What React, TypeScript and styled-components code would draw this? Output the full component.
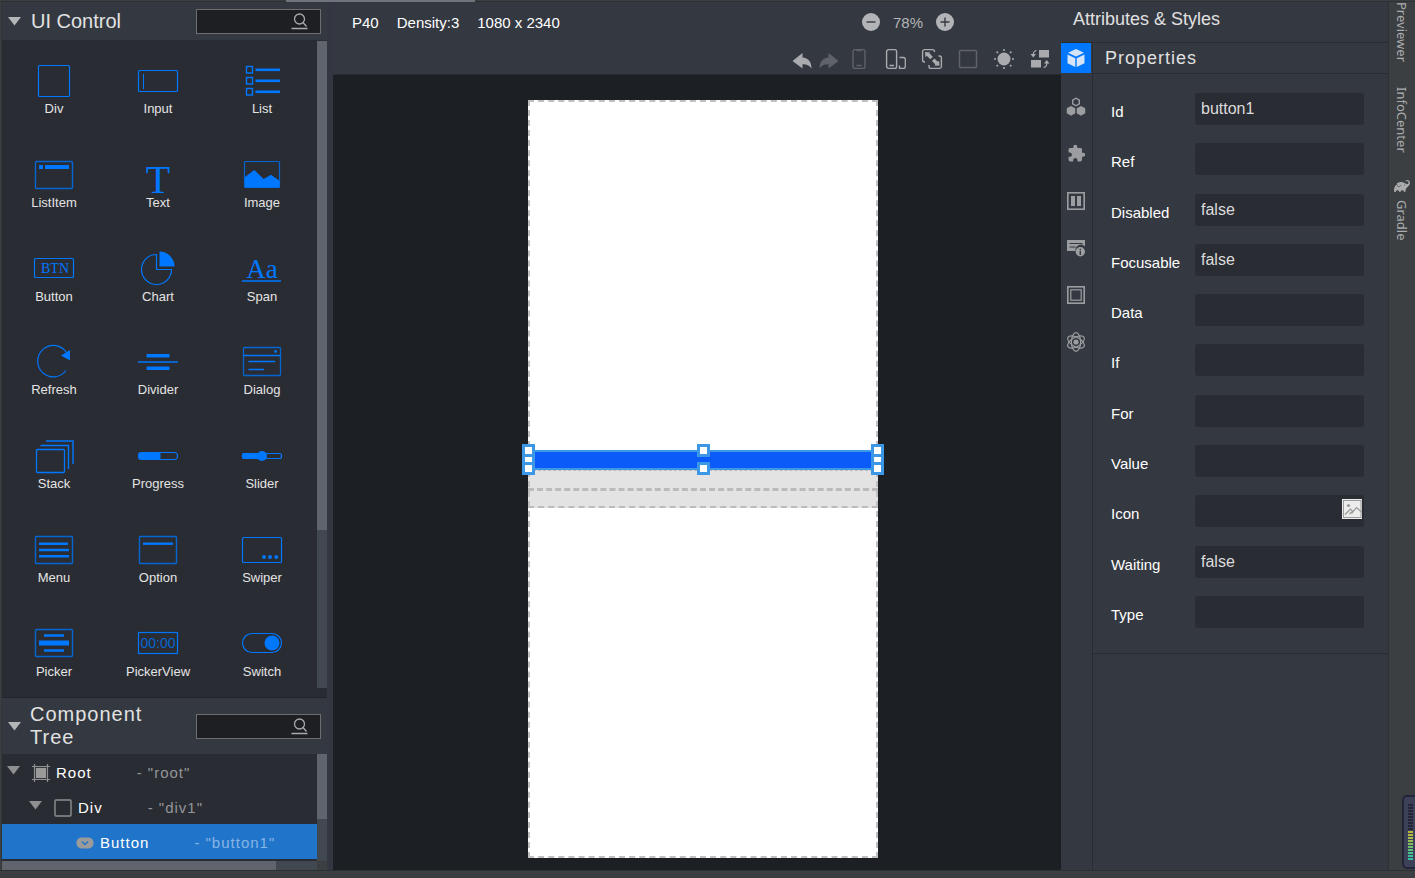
import React from "react";
import styled, { createGlobalStyle } from "styled-components";
import { MdExtension } from "react-icons/md";
import { SiGradle } from "react-icons/si";

const c = {
  ide: "#3c3f41",
  ideLine: "#2e3134",
  panel: "#343840",
  well: "#2a2c33",
  line: "#292c32",
  stage: "#1c1f23",
  thumb: "#60646c",
  track: "#414850",
  blue: "#0077ff",
  blueDim: "#0566d2",
  text: "#dcdddf",
  icon: "#9b9da0",
  iconOff: "#5f6268",
};

const GlobalStyle = createGlobalStyle`
  * { box-sizing: border-box; }
  body {
    margin: 0;
    background: ${c.ide};
    font-family: "Liberation Sans", Arial, sans-serif;
    color: ${c.text};
  }
  button, input { font: inherit; color: inherit; }
  button { background: none; border: 0; padding: 0; cursor: pointer; }
  h1, h2 { margin: 0; font-weight: 400; }
  svg { display: block; overflow: visible; }
`;

/* ---------- shell ---------- */

const Shell = styled.div`
  display: flex;
  flex-direction: column;
  min-height: 100vh;
`;

const TopEdge = styled.div`
  height: 2px;
  background: linear-gradient(${c.ide} 1px, ${c.ideLine} 1px);
  padding-left: 286px;
`;

const TabScroll = styled.div`
  width: 189px;
  height: 2px;
  background: #6f737a;
`;

const Body = styled.div`
  flex: 1;
  display: grid;
  grid-template-columns: 2px 325px 6px minmax(0, 1fr) 328px 26px;
`;

const LeftEdge = styled.div`
  background: ${c.ide};
  border-right: 1px solid #34373a;
`;

const Splitter = styled.div`
  background: #343641;
`;

const StatusBar = styled.footer`
  height: 8px;
  background: ${c.ide};
  border-top: 1px solid ${c.ideLine};
`;

/* ---------- left column ---------- */

const Sidebar = styled.aside`
  display: flex;
  flex-direction: column;
  background: ${c.well};
`;

const PanelHeader = styled.header<{ $tall?: boolean }>`
  display: flex;
  align-items: center;
  height: ${(p) => (p.$tall ? 56 : 38)}px;
  padding: 0 6px;
  background: ${c.panel};
`;

const PanelTitle = styled.h2<{ $spaced?: boolean }>`
  flex: 1;
  margin-left: ${(p) => (p.$spaced ? 9 : 10)}px;
  padding-right: 40px;
  font-size: 20px;
  line-height: 23px;
  letter-spacing: ${(p) => (p.$spaced ? "1px" : "normal")};
  color: #e2e2e2;
`;

const SearchBox = styled.label`
  display: flex;
  align-items: center;
  flex: none;
  width: 125px;
  height: 25px;
  padding-right: 12px;
  background: #1d1f23;
  border: 1px solid #6c6e71;
`;

const SearchInput = styled.input`
  flex: 1;
  min-width: 0;
  padding: 0 6px;
  border: 0;
  outline: 0;
  background: transparent;
  font-size: 14px;
`;

const Palette = styled.div`
  flex: 1;
  display: flex;
  border-top: 1px solid ${c.line};
  border-bottom: 1px solid #22252a;
`;

const PaletteGrid = styled.div`
  flex: 1;
  display: grid;
  grid-template-columns: repeat(3, 104px);
  grid-template-rows: repeat(7, 1fr);
`;

const PaletteItem = styled.button`
  display: flex;
  flex-direction: column;
  align-items: center;
  justify-content: flex-start;
  padding-top: 20px;
  font-size: 13px;
  line-height: 15px;
  color: #e4e4e4;
`;

const VScroll = styled.div`
  display: flex;
  flex-direction: column;
  width: 10px;
`;

const Thumb = styled.div<{ $w?: string; $h?: string }>`
  width: ${(p) => p.$w ?? "100%"};
  height: ${(p) => p.$h ?? "100%"};
  background: ${c.thumb};
`;

const Track = styled.div`
  flex: 1;
  background: ${c.track};
`;

const PaletteScroll = styled(VScroll)`
  padding-bottom: 9px;
`;

const TreeArea = styled.div`
  display: flex;
`;

const TreeList = styled.ul`
  flex: 1;
  margin: 0;
  padding: 0 0 2px;
  list-style: none;
`;

const TreeRow = styled.li<{ $depth: number; $selected?: boolean }>`
  display: flex;
  align-items: center;
  height: 35px;
  padding: 2px 0 0 ${(p) => 5 + p.$depth * 22}px;
  background: ${(p) => (p.$selected ? "#2074c9" : "transparent")};
  font-size: 15px;
  letter-spacing: 1px;
  color: #fff;
`;

const TreeCaret = styled.span`
  width: 13px;
  height: 14px;
  margin-right: 12px;
`;

const TreeIcon = styled.span`
  width: 18px;
  margin-right: 6px;
`;

const TreeValue = styled.span<{ $selected?: boolean }>`
  margin-left: 45px;
  color: ${(p) => (p.$selected ? "#86b6e6" : "#94969a")};
`;

const HScroll = styled.div`
  display: flex;
  height: 9px;
  padding-right: 10px;
  background: ${c.ide};
`;

/* ---------- centre ---------- */

const Center = styled.main`
  display: flex;
  flex-direction: column;
  background: ${c.stage};
`;

const CenterHeader = styled.header`
  height: 73px;
  background: ${c.panel};
  border-bottom: 1px solid ${c.line};
`;

const InfoRow = styled.div`
  display: flex;
  align-items: center;
  height: 40px;
  padding: 0 107px 0 19px;
  font-size: 15px;
  color: #fff;
`;

const Info = styled.span`
  margin-right: 18px;
`;

const Zoom = styled.div`
  display: flex;
  align-items: center;
  gap: 13px;
  margin-left: auto;
  color: #b3b4b7;
`;

const Toolbar = styled.div`
  display: flex;
  justify-content: flex-end;
  height: 33px;
  padding-right: 3px;
`;

const ToolButton = styled.button<{ $narrow?: boolean; $dim?: boolean }>`
  display: grid;
  place-items: center;
  width: ${(p) => (p.$narrow ? 27 : 36)}px;
  color: ${(p) => (p.$dim ? c.iconOff : "#aaabae")};
`;

const Stage = styled.div`
  flex: 1;
  display: flex;
  justify-content: center;
  align-items: flex-start;
  padding: 25px 0 12px 12px;
`;

const Device = styled.div`
  display: flex;
  flex-direction: column;
  justify-content: center;
  width: 350px;
  aspect-ratio: 1080 / 2340;
  background: #fff;
  outline: 2px dashed #c0c0c0;
  outline-offset: -2px;
`;

const SelectedButton = styled.div`
  position: relative;
  height: 20px;
  background: #0a5bf7;
  border: solid #3c98e6;
  border-width: 2px 0;
`;

const SelectionFrame = styled.div`
  position: absolute;
  inset: -1px 0 -1px 1px;
`;

const Handle = styled.span<{ $x: number; $y: number }>`
  position: absolute;
  left: ${(p) => p.$x}%;
  top: ${(p) => p.$y}%;
  width: 13px;
  height: 13px;
  margin: -7px 0 0 -7px;
  background: #fff;
  border: 3px solid #3c98e6;
`;

const EmptyRow = styled.div`
  height: 18px;
  background: #e3e3e3;
  border-top: 1px dashed #bbb;

  & + & {
    height: 20px;
    border-top-width: 3px;
    border-bottom: 2px dashed #bbb;
  }
`;

/* ---------- attributes ---------- */

const Attributes = styled.aside`
  display: flex;
  flex-direction: column;
  background: ${c.panel};
  border-right: 1px solid ${c.ideLine};
`;

const AttributesTitle = styled.h1`
  height: 41px;
  padding-left: 12px;
  font-size: 18px;
  line-height: 34px;
  border-bottom: 1px solid ${c.line};
  color: #e0e0e0;
`;

const AttributesBody = styled.div`
  flex: 1;
  display: flex;
`;

const Rail = styled.nav`
  display: flex;
  flex-direction: column;
  width: 32px;
  border-right: 1px solid ${c.line};
`;

const RailButton = styled.button<{ $active?: boolean }>`
  display: grid;
  place-items: center;
  width: 30px;
  height: ${(p) => (p.$active ? 30 : 47)}px;
  margin-bottom: ${(p) => (p.$active ? 10 : 0)}px;
  background: ${(p) => (p.$active ? c.blue : "transparent")};
  color: ${(p) => (p.$active ? "#d5e4f7" : c.icon)};
`;

const Properties = styled.section`
  flex: 1;
`;

const PropertiesTitle = styled.h2`
  height: 31px;
  padding-left: 12px;
  font-size: 18px;
  line-height: 30px;
  letter-spacing: 1px;
  border-bottom: 1px solid ${c.line};
  color: #e0e0e0;
`;

const PropertyForm = styled.form`
  height: 580px;
  display: grid;
  grid-template-columns: 84px 1fr;
  grid-template-rows: repeat(11, 1fr);
  align-items: center;
  padding: 10px 24px 16px 18px;
  border-bottom: 1px solid ${c.line};
`;

const PropertyLabel = styled.label`
  padding-top: 5px;
  font-size: 15px;
  color: #fff;
`;

const PropertyField = styled.div`
  position: relative;
`;

const PropertyInput = styled.input`
  display: block;
  width: 100%;
  height: 32px;
  padding: 0 6px;
  border: 0;
  border-radius: 3px;
  outline: 0;
  background: ${c.well};
  font-size: 16px;
  color: #dcdcdc;
`;

const PickImage = styled.button`
  position: absolute;
  right: 2px;
  top: 4px;
`;

/* ---------- tool window strip ---------- */

const Strip = styled.nav`
  position: relative;
  display: flex;
  flex-direction: column;
  align-items: center;
  background: ${c.ide};
`;

const StripTab = styled.button`
  display: flex;
  align-items: center;
  gap: 6px;
  margin-bottom: 25px;
  writing-mode: vertical-rl;
  font-family: "Noto Sans", sans-serif;
  font-size: 13px;
  line-height: 22px;
  color: #a9abad;
`;

const Meter = styled.div`
  position: absolute;
  right: 0;
  bottom: 1px;
  display: flex;
  flex-direction: column;
  justify-content: flex-end;
  gap: 1px;
  width: 13px;
  height: 74px;
  padding: 8px 2px 7px 4px;
  background: #3d4158;
  border: 2px solid #23263a;
  border-right: 0;
  border-radius: 5px 0 0 5px;
`;

const MeterBar = styled.i<{ $color: string }>`
  width: 5px;
  height: 2px;
  flex: none;
  background: ${(p) => p.$color};
`;

/* ---------- drawings ---------- */

const Art = ({ children }: { children: React.ReactNode }) => (
  <svg width="44" height="40" viewBox="0 0 44 40" fill="none" stroke={c.blue} strokeWidth="1" aria-hidden="true">
    {children}
  </svg>
);

const solid = { fill: c.blue, stroke: "none" };

const Card = ({ y = 6 }: { y?: number }) => (
  <rect x="3.5" y={y + 0.5} width="37" height="27" rx="1" stroke={c.blueDim} strokeWidth="1.4" />
);

const palette: { name: string; art: React.ReactNode }[] = [
  { name: "Div", art: <rect x="6.5" y="4.5" width="31" height="31" rx="1" strokeWidth="1.2" /> },
  {
    name: "Input",
    art: (
      <>
        <rect x="2.5" y="9.5" width="39" height="21" rx="1" strokeWidth="1.2" />
        <path d="M7.5 13V28" />
      </>
    ),
  },
  {
    name: "List",
    art: [5.5, 16.5, 27.5].map((y) => (
      <g key={y}>
        <rect x="6.5" y={y} width="6" height="6.5" strokeWidth="1.4" />
        <rect x="15.5" y={y + 2} width="24.5" height="2.6" {...solid} />
      </g>
    )),
  },
  {
    name: "ListItem",
    art: (
      <>
        <Card />
        <rect x="7" y="10" width="4" height="4" {...solid} />
        <rect x="13" y="10" width="24" height="4" {...solid} />
      </>
    ),
  },
  {
    name: "Text",
    art: (
      <text x="22" y="38" fontSize="40" textAnchor="middle" fontFamily="Liberation Serif, serif" {...solid}>
        T
      </text>
    ),
  },
  {
    name: "Image",
    art: (
      <>
        <rect x="4.5" y="6.5" width="35" height="26" rx="1" stroke={c.blueDim} strokeWidth="1.2" />
        <path d="M5 22L14.3 15L23.7 24L31 19.7L39.5 25.7V32.5H5Z" {...solid} />
      </>
    ),
  },
  {
    name: "Button",
    art: (
      <>
        <rect x="2.5" y="9.5" width="39" height="19" rx="1" strokeWidth="1.2" />
        <text x="23" y="24" fontSize="14" textAnchor="middle" fontFamily="Liberation Serif, serif" {...solid}>
          BTN
        </text>
      </>
    ),
  },
  {
    name: "Chart",
    art: (
      <>
        <path d="M20.5 5.5A15 15 0 1 0 35.5 20.5H20.5Z" strokeWidth="1.2" />
        <path d="M23.5 2.5A15 15 0 0 1 38.5 17.5H23.5Z" {...solid} />
      </>
    ),
  },
  {
    name: "Span",
    art: (
      <>
        <text x="22" y="29" fontSize="27" textAnchor="middle" fontFamily="Liberation Serif, serif" {...solid}>
          Aa
        </text>
        <path d="M2 32H41" strokeWidth="1.6" />
      </>
    ),
  },
  {
    name: "Refresh",
    art: (
      <>
        <path d="M34 28.5A15.7 15.7 0 1 1 34.5 10.5" strokeWidth="1.2" />
        <path d="M29 13.5L38 8V18.5Z" {...solid} />
      </>
    ),
  },
  {
    name: "Divider",
    art: (
      <>
        <path d="M2 20H42" strokeWidth="1.3" />
        <rect x="10.5" y="12" width="23" height="3.5" {...solid} />
        <rect x="10.5" y="24.5" width="23" height="3.5" {...solid} />
      </>
    ),
  },
  {
    name: "Dialog",
    art: (
      <>
        <rect x="3.5" y="5.5" width="37" height="28" rx="1" stroke={c.blueDim} strokeWidth="1.3" />
        <path d="M3.5 13.5H40.5M8.5 19.5H35M8.5 27.5H24" strokeWidth="1.3" />
        <circle cx="35.5" cy="9.5" r="1.4" {...solid} />
      </>
    ),
  },
  {
    name: "Stack",
    art: (
      <>
        <rect x="4.5" y="13.5" width="28" height="23" rx="1" strokeWidth="1.3" />
        <path d="M8.5 9.5H36.5V33M14 5H41V28" strokeWidth="1.4" />
      </>
    ),
  },
  {
    name: "Progress",
    art: (
      <>
        <rect x="2.5" y="16.5" width="39" height="7" rx="3.5" strokeWidth="1.2" />
        <path d="M6 16H24.5V24H6A4 4 0 0 1 6 16Z" {...solid} />
      </>
    ),
  },
  {
    name: "Slider",
    art: (
      <>
        <rect x="2.5" y="17.5" width="39" height="5" rx="2" strokeWidth="1.2" />
        <path d="M4 17H22V23H4A2 2 0 0 1 2 21V19A2 2 0 0 1 4 17Z" {...solid} />
        <circle cx="22" cy="20" r="5" {...solid} />
      </>
    ),
  },
  {
    name: "Menu",
    art: (
      <>
        <Card />
        <path d="M7 13.7H36M7 20H37M7 26.3H37" strokeWidth="2.4" />
      </>
    ),
  },
  {
    name: "Option",
    art: (
      <>
        <Card />
        <path d="M7 13.7H37" strokeWidth="2.4" />
      </>
    ),
  },
  {
    name: "Swiper",
    art: (
      <>
        <rect x="2.5" y="7.5" width="39" height="25" rx="1" strokeWidth="1.2" />
        <circle cx="24" cy="27" r="2" {...solid} />
        <circle cx="30" cy="27" r="2" {...solid} />
        <circle cx="36.3" cy="27" r="2" {...solid} />
      </>
    ),
  },
  {
    name: "Picker",
    art: (
      <>
        <Card y={5} />
        <path d="M12 11.5H32M12 26.5H32" strokeWidth="2.4" />
        <rect x="7" y="16.5" width="30" height="5" {...solid} />
      </>
    ),
  },
  {
    name: "PickerView",
    art: (
      <>
        <rect x="2.5" y="8.5" width="39" height="21" strokeWidth="1.2" />
        <text x="22" y="24" fontSize="14" textAnchor="middle" fill={c.blueDim} stroke="none">
          00:00
        </text>
      </>
    ),
  },
  {
    name: "Switch",
    art: (
      <>
        <rect x="2.5" y="9.5" width="39" height="19" rx="9.5" strokeWidth="1.2" />
        <circle cx="32" cy="19" r="7.5" {...solid} />
      </>
    ),
  },
];

const Caret = ({ dim }: { dim?: boolean }) => (
  <svg width="13" height="9" viewBox="0 0 13 9" aria-hidden="true">
    <path d="M0 0H13L6.5 8.5Z" fill={dim ? "#8d8f91" : "#b4b5b6"} />
  </svg>
);

const Search = ({ label }: { label: string }) => (
  <SearchBox>
    <SearchInput type="text" aria-label={label} />
    <svg width="18" height="18" viewBox="0 0 18 18" fill="none" stroke="#a9aaac" strokeWidth="1.3" aria-hidden="true">
      <circle cx="9.5" cy="7" r="5" />
      <path d="M13 10.5L16.5 14.5M1.5 16.5H17.5" />
    </svg>
  </SearchBox>
);

const Svg20 = ({ children }: { children: React.ReactNode }) => (
  <svg width="20" height="20" viewBox="0 0 20 20" fill="none" stroke="currentColor" strokeWidth="1.2" aria-hidden="true">
    {children}
  </svg>
);

const ink = { fill: "currentColor", stroke: "none" };
const backArrow = "M0.5 12L10.5 4V8.5C16 9 19.5 12.5 19.5 19.5C17 16 14.5 15 10.5 15.2V19.5Z";

const tools: { name: string; narrow?: boolean; dim?: boolean; art: React.ReactNode }[] = [
  { name: "Undo", narrow: true, art: <path d={backArrow} {...ink} /> },
  { name: "Redo", narrow: true, dim: true, art: <path d={backArrow} transform="translate(20 0) scale(-1 1)" {...ink} /> },
  {
    name: "Device",
    dim: true,
    art: (
      <>
        <rect x="3" y="0.6" width="12" height="18.8" rx="2" strokeWidth="1.4" />
        <path d="M6.5 1.5H11.5M6.5 16.5H11.5" strokeWidth="1.4" />
      </>
    ),
  },
  {
    name: "Multiple devices",
    art: (
      <>
        <rect x="0.6" y="0.6" width="10" height="18.8" rx="2" strokeWidth="1.4" />
        <path d="M3.5 16.5H8M13.5 8.5H17.3A2 2 0 0 1 19.3 10.5V17.4A2 2 0 0 1 17.3 19.4H13.5V16.5" strokeWidth="1.3" />
      </>
    ),
  },
  {
    name: "Rotate",
    art: (
      <>
        <path
          d="M12.5 3V2.5A2 2 0 0 0 10.5 0.6H2.5A2 2 0 0 0 0.6 2.5V11A2 2 0 0 0 2.5 13H3M16.5 7H17.5A2 2 0 0 1 19.4 9V17.5A2 2 0 0 1 17.5 19.4H9A2 2 0 0 1 7 17.5V16"
          strokeWidth="1.4"
        />
        <path d="M5.5 5L9.6 9.1M11.2 10.7L15 14.5" strokeWidth="3.6" />
        <path d="M3 3L8.3 3.4L3.4 8.3ZM17.5 16.8L12.2 16.4L17.1 11.5Z" {...ink} />
      </>
    ),
  },
  { name: "Outline", dim: true, art: <rect x="1.5" y="1.5" width="17" height="17" rx="1" strokeWidth="1.5" /> },
  {
    name: "Theme",
    art: (
      <>
        <circle cx="10" cy="10" r="6.5" {...ink} />
        <path d="M10 0V2M10 18V20M0 10H2M18 10H20M2.6 2.6L4 4M16 16L17.4 17.4M17.4 2.6L16 4M4 16L2.6 17.4" strokeWidth="1.5" />
      </>
    ),
  },
  {
    name: "Switch layout",
    art: (
      <>
        <path d="M9 1H19V8.5H9ZM1 11H11V18.5H1Z" {...ink} />
        <path d="M6.5 1.5C3.8 2 3.2 3.5 3.2 6M13.5 18.5C16.2 18 16.8 16.5 16.8 14" />
        <path d="M0.5 5H6L3.2 8.5ZM14 14.5H19.5L16.8 11Z" {...ink} />
      </>
    ),
  },
];

const hex = (cx: number, cy: number, r: number) =>
  `M${cx} ${cy - r}L${cx + r * 0.87} ${cy - r / 2}V${cy + r / 2}L${cx} ${cy + r}L${cx - r * 0.87} ${cy + r / 2}V${cy - r / 2}Z`;

const rail: { name: string; art: React.ReactNode }[] = [
  {
    name: "General",
    art: (
      <Svg20>
        <path d={hex(5, 13.8, 4.9)} {...ink} />
        <path d={hex(15, 13.8, 4.9)} {...ink} />
        <path d={hex(10, 5, 3.8)} strokeWidth="1.4" />
      </Svg20>
    ),
  },
  { name: "Features", art: <MdExtension size={19} /> },
  {
    name: "Layout",
    art: (
      <Svg20>
        <rect x="1.8" y="1.8" width="16.4" height="16.4" strokeWidth="1.6" />
        <path d="M5 5H9V15H5ZM11 5H15V15H11Z" {...ink} />
      </Svg20>
    ),
  },
  {
    name: "Details",
    art: (
      <Svg20>
        <path d="M1 2H19V8.5A5.5 5.5 0 0 0 9.5 13H1Z" {...ink} />
        <path d="M3.5 5.5H16.5M3.5 9H9.5" stroke={c.panel} />
        <circle cx="14.3" cy="13.8" r="4.7" {...ink} />
        <path d="M14.3 10.8V12.2M14.3 13V17" stroke={c.panel} strokeWidth="1.4" />
      </Svg20>
    ),
  },
  {
    name: "Box model",
    art: (
      <Svg20>
        <rect x="1.8" y="1.8" width="16.4" height="16.4" strokeWidth="1.6" />
        <rect x="4.8" y="4.8" width="10.4" height="10.4" />
      </Svg20>
    ),
  },
  {
    name: "Events",
    art: (
      <Svg20>
        {[30, 90, 150].map((a) => (
          <ellipse key={a} cx="10" cy="10" rx="9.3" ry="4.6" transform={`rotate(${a} 10 10)`} />
        ))}
        <circle cx="10" cy="10" r="2.6" {...ink} />
      </Svg20>
    ),
  },
];

const properties: [string, string][] = [
  ["Id", "button1"],
  ["Ref", ""],
  ["Disabled", "false"],
  ["Focusable", "false"],
  ["Data", ""],
  ["If", ""],
  ["For", ""],
  ["Value", ""],
  ["Icon", ""],
  ["Waiting", "false"],
  ["Type", ""],
];

const meter = [
  ...Array(9).fill("#23263a"),
  "#b5b73c",
  "#b5b944",
  "#a9bb4c",
  "#98bd56",
  "#84be62",
  "#70bf70",
  "#5cc07f",
  "#4abf8f",
  "#3dbe9d",
  "#35bda8",
];

const ZoomButton = ({ plus }: { plus?: boolean }) => (
  <button type="button" aria-label={plus ? "Zoom in" : "Zoom out"}>
    <svg width="18" height="18" viewBox="0 0 18 18">
      <circle cx="9" cy="9" r="9" fill="#b3b4b7" />
      <path d={plus ? "M4.5 9H13.5M9 4.5V13.5" : "M4.5 9H13.5"} stroke={c.panel} strokeWidth="1.4" />
    </svg>
  </button>
);

const handles: [number, number][] = [
  [0, 50],
  [100, 50],
  [0, 0],
  [50, 0],
  [100, 0],
  [0, 100],
  [50, 100],
  [100, 100],
];

export default function App() {
  return (
    <Shell>
      <GlobalStyle />
      <TopEdge>
        <TabScroll />
      </TopEdge>
      <Body>
        <LeftEdge />
        <Sidebar>
          <PanelHeader>
            <Caret />
            <PanelTitle>UI Control</PanelTitle>
            <Search label="Search controls" />
          </PanelHeader>
          <Palette>
            <PaletteGrid>
              {palette.map((p) => (
                <PaletteItem key={p.name} type="button">
                  <Art>{p.art}</Art>
                  {p.name}
                </PaletteItem>
              ))}
            </PaletteGrid>
            <PaletteScroll>
              <Thumb $h="75.5%" />
              <Track />
            </PaletteScroll>
          </Palette>
          <PanelHeader $tall>
            <Caret />
            <PanelTitle $spaced>Component Tree</PanelTitle>
            <Search label="Search component tree" />
          </PanelHeader>
          <TreeArea>
            <TreeList>
              <TreeRow $depth={0}>
                <TreeCaret>
                  <Caret dim />
                </TreeCaret>
                <TreeIcon>
                  <svg width="18" height="18" viewBox="0 0 18 18" fill="none" stroke="#8d8f91" strokeWidth="1.2">
                    <path d="M2.5 0V18M15.5 0V18M0 2.5H18M0 15.5H18" />
                    <rect x="4.5" y="4.5" width="9" height="9" fill="#9a9a9a" stroke="#9a9a9a" />
                  </svg>
                </TreeIcon>
                Root
                <TreeValue>- "root"</TreeValue>
              </TreeRow>
              <TreeRow $depth={1}>
                <TreeCaret>
                  <Caret dim />
                </TreeCaret>
                <TreeIcon>
                  <svg width="18" height="18" viewBox="0 0 18 18" fill="none" stroke="#8d8f91" strokeWidth="1.4">
                    <rect x="1" y="1" width="16" height="16" rx="1" />
                  </svg>
                </TreeIcon>
                Div
                <TreeValue>- "div1"</TreeValue>
              </TreeRow>
              <TreeRow $depth={2} $selected>
                <TreeCaret />
                <TreeIcon>
                  <svg width="18" height="12" viewBox="0 0 18 12" fill="none">
                    <rect x="0.5" y="0.5" width="17" height="11" rx="5" fill="#9b9b9b" />
                    <path d="M6 4.5L9 7.5L12 4.5" stroke="#2074c9" strokeWidth="1.4" />
                  </svg>
                </TreeIcon>
                Button
                <TreeValue $selected>- "button1"</TreeValue>
              </TreeRow>
            </TreeList>
            <VScroll>
              <Thumb $h="65px" />
              <Track />
            </VScroll>
          </TreeArea>
          <HScroll>
            <Thumb $w="87%" />
            <Track />
          </HScroll>
        </Sidebar>
        <Splitter />
        <Center>
          <CenterHeader>
            <InfoRow>
              <Info>P40</Info>
              <Info>Density:3</Info>
              <Info>1080 x 2340</Info>
              <Zoom>
                <ZoomButton />
                <span>78%</span>
                <ZoomButton plus />
              </Zoom>
            </InfoRow>
            <Toolbar>
              {tools.map((t) => (
                <ToolButton key={t.name} type="button" aria-label={t.name} $narrow={t.narrow} $dim={t.dim}>
                  <Svg20>{t.art}</Svg20>
                </ToolButton>
              ))}
            </Toolbar>
          </CenterHeader>
          <Stage>
            <Device>
              <SelectedButton>
                <SelectionFrame>
                  {handles.map(([x, y]) => (
                    <Handle key={`${x}-${y}`} $x={x} $y={y} />
                  ))}
                </SelectionFrame>
              </SelectedButton>
              <EmptyRow />
              <EmptyRow />
            </Device>
          </Stage>
        </Center>
        <Attributes>
          <AttributesTitle>Attributes &amp; Styles</AttributesTitle>
          <AttributesBody>
            <Rail>
              <RailButton type="button" aria-label="Properties" $active>
                <Svg20>
                  <path d="M10 1L18 4.8L10 8.6L2 4.8ZM1.5 6.5L9.3 10.2V19L1.5 15.2ZM18.5 6.5L10.7 10.2V19L18.5 15.2Z" {...ink} />
                </Svg20>
              </RailButton>
              {rail.map((r) => (
                <RailButton key={r.name} type="button" aria-label={r.name}>
                  {r.art}
                </RailButton>
              ))}
            </Rail>
            <Properties>
              <PropertiesTitle>Properties</PropertiesTitle>
              <PropertyForm>
                {properties.map(([name, value]) => (
                  <React.Fragment key={name}>
                    <PropertyLabel htmlFor={`prop-${name}`}>{name}</PropertyLabel>
                    <PropertyField>
                      <PropertyInput id={`prop-${name}`} type="text" defaultValue={value} />
                      {name === "Icon" && (
                        <PickImage type="button" aria-label="Choose image">
                          <svg width="20" height="20" viewBox="0 0 20 20" fill="none" stroke="#9a9a9a">
                            <rect width="20" height="20" fill="#ececec" stroke="none" />
                            <rect x="1.5" y="1.5" width="17.5" height="17" />
                            <circle cx="6.5" cy="6.5" r="1.6" fill="#9a9a9a" stroke="none" />
                            <path d="M3 15.5L8.5 10L10.5 12L7.5 15M9.5 14.5L14.5 8.5L19.5 13" strokeWidth="1.2" />
                          </svg>
                        </PickImage>
                      )}
                    </PropertyField>
                  </React.Fragment>
                ))}
              </PropertyForm>
            </Properties>
          </AttributesBody>
        </Attributes>
        <Strip>
          <StripTab type="button">Previewer</StripTab>
          <StripTab type="button">InfoCenter</StripTab>
          <StripTab type="button">
            <SiGradle size={16} />
            Gradle
          </StripTab>
          <Meter>
            {meter.map((color, i) => (
              <MeterBar key={i} $color={color} />
            ))}
          </Meter>
        </Strip>
      </Body>
      <StatusBar />
    </Shell>
  );
}
